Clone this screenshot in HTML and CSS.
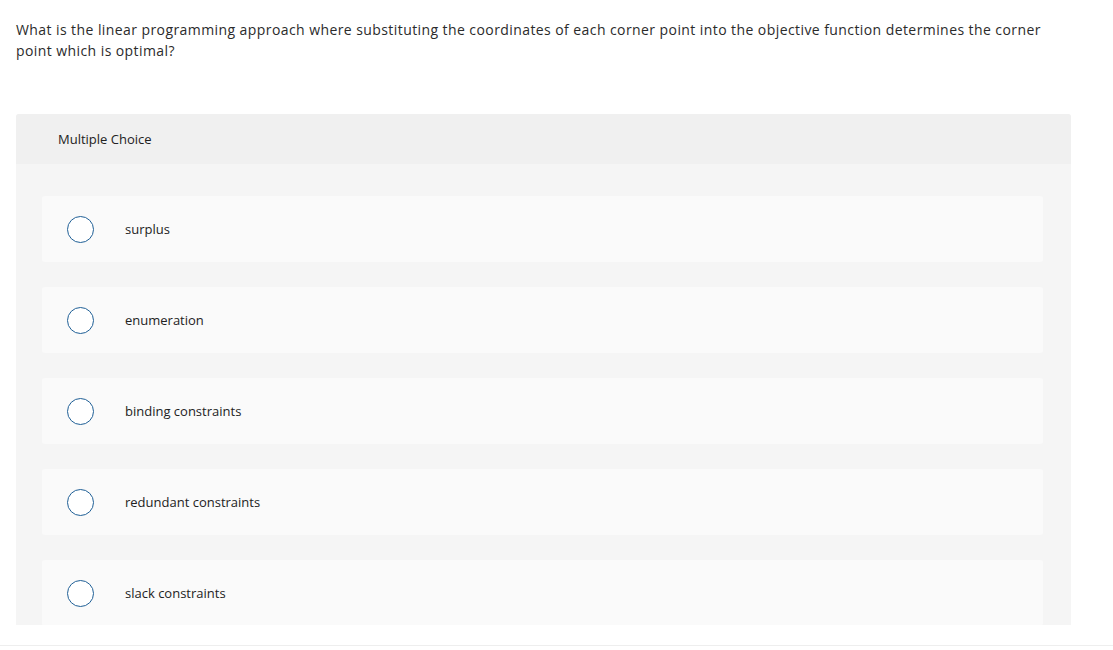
FILE: index.html
```html
<!DOCTYPE html>
<html>
<head>
<meta charset="utf-8">
<link rel="stylesheet" href="styles.css">
</head>
<body>
<div class="page">
  <p class="question">What is the linear programming approach where substituting the coordinates of each corner point into the objective function determines the corner point which is optimal?</p>
  <div class="panel">
    <div class="panel-head">Multiple Choice</div>
    <div class="panel-body">
      <div class="option"><span class="radio"></span><span class="label">surplus</span></div>
      <div class="option"><span class="radio"></span><span class="label">enumeration</span></div>
      <div class="option"><span class="radio"></span><span class="label">binding constraints</span></div>
      <div class="option"><span class="radio"></span><span class="label">redundant constraints</span></div>
      <div class="option"><span class="radio"></span><span class="label">slack constraints</span></div>
    </div>
  </div>
  <div class="footer-line"></div>
</div>
</body>
</html>
```
FILE: styles.css
```css
html, body {
  margin: 0;
  padding: 0;
  background: #fff;
}
body {
  font-family: "Open Sans", "Liberation Sans", Arial, sans-serif;
  color: #222;
}
.page {
  padding: 0 0 0 16px;
  width: 1055px;
}
.question {
  margin: 0;
  padding-top: 19px;
  font-size: 14px;
  line-height: 21px;
  letter-spacing: 0.42px;
  color: #2b2b2b;
  width: 1045px;
}
.panel {
  margin-top: 53px;
  width: 1055px;
  height: 511px;
  overflow: hidden;
  background: #f5f5f5;
  border-radius: 3px 3px 0 0;
}
.panel-head {
  height: 50px;
  background: #f0f0f0;
  display: flex;
  align-items: center;
  padding-left: 42px;
  font-size: 13px;
  color: #222;
}
.panel-body {
  padding: 32px 28px 0 26px;
  display: flex;
  flex-direction: column;
  gap: 25px;
}
.option {
  height: 66px;
  flex: none;
  background: #fafafa;
  border-radius: 3px;
  display: flex;
  align-items: center;
  padding-left: 25px;
}
.radio {
  width: 25px;
  height: 25px;
  border: 1.5px solid #1f5f96;
  border-radius: 50%;
  background: #fff;
  flex: none;
}
.label {
  margin-left: 31px;
  font-size: 13px;
  color: #222;
}
.footer-line {
  margin-top: 20px;
  margin-left: -16px;
  width: 1113px;
  border-top: 1px solid #eeeeee;
}
```
